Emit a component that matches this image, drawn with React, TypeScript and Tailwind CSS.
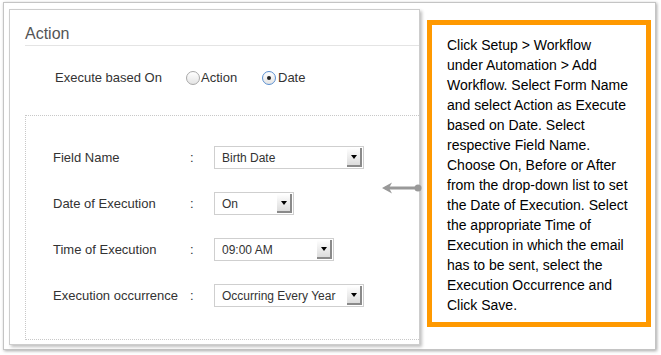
import React from "react";

const rows = [
  { label: "Field Name", value: "Birth Date", w: "w-[150px]" },
  { label: "Date of Execution", value: "On", w: "w-[80px]" },
  { label: "Time of Execution", value: "09:00 AM", w: "w-[120px]" },
  { label: "Execution occurrence", value: "Occurring Every Year", w: "w-[150px]" },
];

const helpLines = [
  "Click Setup > Workflow",
  "under Automation > Add",
  "Workflow. Select Form Name",
  "and select Action as Execute",
  "based on Date. Select",
  "respective Field Name.",
  "Choose On, Before or After",
  "from the drop-down list to set",
  "the Date of Execution. Select",
  "the appropriate Time of",
  "Execution in which the email",
  "has to be sent, select the",
  "Execution Occurrence and",
  "Click Save.",
];

function Select({ value, w }: { value: string; w: string }) {
  return (
    <div className={`${w} h-[23px] border border-[#cfcfcf] bg-white flex items-center justify-between pl-[7px] pr-[1px]`}>
      <span className="text-[12px] text-[#333]">{value}</span>
      <div className="w-[15px] h-[19px] bg-gradient-to-b from-white to-[#dcdcdc] border-r-2 border-b-2 border-[#8a8a8a] flex items-center justify-center">
        <span className="block w-0 h-0 border-l-[3px] border-r-[3px] border-t-[4px] border-l-transparent border-r-transparent border-t-black" />
      </div>
    </div>
  );
}

function Radio({ checked }: { checked?: boolean }) {
  return (
    <span
      className={`w-[14px] h-[14px] rounded-full border flex items-center justify-center bg-gradient-to-b from-white to-[#e4e4e4] ${checked ? "border-[#5a8fd0]" : "border-[#a8a8a8]"}`}
    >
      {checked && <span className="w-[4px] h-[4px] rounded-full bg-[#222]" />}
    </span>
  );
}

export default function App() {
  return (
    <div className="w-[661px] h-[355px] bg-white pt-[2px] pl-[3px] font-['Liberation_Sans',Arial,sans-serif]">
      <div className="relative w-[653px] h-[348px] bg-white border border-[#c4c4c4] shadow-[1px_1px_3px_rgba(0,0,0,0.35)] flex items-start pl-[5px] pt-[6px]">
        {/* form screenshot */}
        <div className="w-[411px] h-[336px] bg-white border border-[#cdcdcd] shadow-[2px_2px_3px_rgba(0,0,0,0.25)] overflow-hidden pl-[15px]">
          <div className="w-[420px]">
            <div className="h-[36px] pt-[16px] text-[16px] text-[#555] leading-[16px] border-b border-[#e4e4e4]">
              Action
            </div>
            <div className="flex items-center h-[64px] pl-[30px] text-[13px] text-[#333]">
              <span className="w-[131px]">Execute based On</span>
              <Radio />
              <span className="ml-[1px] w-[61px]">Action</span>
              <Radio checked />
              <span className="ml-[2px]">Date</span>
            </div>
            <div className="mt-[5px] h-[225px] border border-dotted border-[#c8c8c8] pt-[30px] pl-[27px] flex flex-col gap-[23px]">
              {rows.map((r) => (
                <div key={r.label} className="flex items-center h-[23px] text-[13px] text-[#333]">
                  <span className="w-[137px]">{r.label}</span>
                  <span className="w-[24px]">:</span>
                  <Select value={r.value} w={r.w} />
                </div>
              ))}
            </div>
          </div>
        </div>

        {/* connector arrow */}
        <svg width="40" height="12" viewBox="0 0 40 12" className="absolute left-[378px] top-[179px]">
          <path d="M3 6 L36 6" stroke="#999" strokeWidth="3" />
          <path d="M0 6 L10 0.5 L7 6 L10 11.5 Z" fill="#999" />
          <circle cx="36" cy="6" r="3.5" fill="#999" />
        </svg>

        {/* help text */}
        <div className="ml-[7px] mt-[11px] w-[224px] h-[307px] border-[5px] border-[#ff9900] bg-white pl-[15px] pt-[10px] text-[14px] leading-[20px] text-[#000]">
          {helpLines.map((l) => (
            <div key={l} className="whitespace-nowrap">{l}</div>
          ))}
        </div>
      </div>
    </div>
  );
}
